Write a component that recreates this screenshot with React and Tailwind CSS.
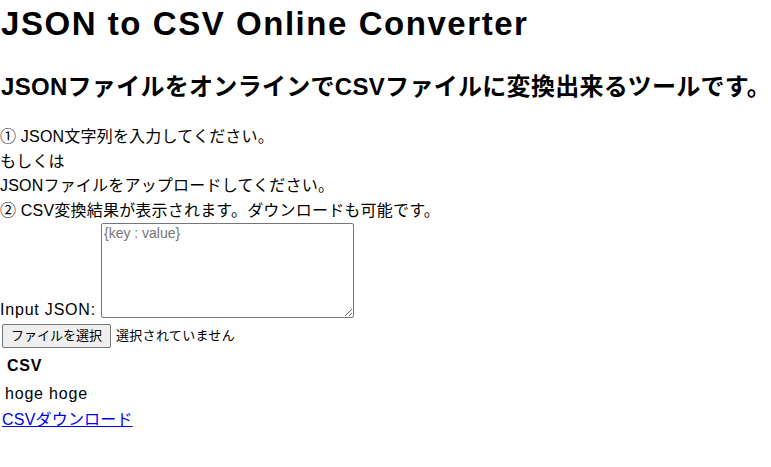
import React, { useState } from 'react';

const font = "font-['Liberation_Sans','Noto_Sans_CJK_JP',sans-serif]";

const App = () => {
  const [json, setJson] = useState('');

  return (
    <div className={`${font} text-black bg-white min-h-screen w-[771px] h-[467px] overflow-hidden`}>
      {/* Title */}
      <h1 className="text-[33px] leading-[40px] font-bold mt-[4px] ml-[1px] tracking-[1.55px] whitespace-nowrap">
        JSON to CSV Online Converter
      </h1>
      <h2 className="text-[24px] leading-[32px] font-bold mt-[27px] ml-[1px] tracking-[0.3px] whitespace-nowrap">
        JSONファイルをオンラインでCSVファイルに変換出来るツールです。
      </h2>

      {/* Instructions */}
      <div className="mt-[22px] text-[16px] leading-[24.5px] tracking-[0.2px]">
        <p>① JSON文字列を入力してください。</p>
        <p>もしくは</p>
        <p>JSONファイルをアップロードしてください。</p>
        <p>② CSV変換結果が表示されます。ダウンロードも可能です。</p>
      </div>

      {/* Input */}
      <div className="flex items-end">
        <label className="text-[16px] leading-[20px] mb-[-2px] tracking-[0.8px]">Input JSON:</label>
        <textarea
          value={json}
          onChange={(e) => setJson(e.target.value)}
          placeholder="{key : value}"
          className="ml-[5px] w-[253px] h-[95px] border border-[#767676] rounded-[2px] px-[2px] py-[1px] text-[14px] leading-[17px] placeholder:text-[#757575] resize-y"
        />
      </div>

      {/* File select */}
      <div className="flex items-center mt-[6px] ml-[2px] text-[13px]">
        <button className="h-[24px] px-[8px] bg-[#efefef] border border-[#767676] rounded-[2px] text-[13px] leading-[16px]">
          ファイルを選択
        </button>
        <span className="ml-[5px] tracking-[0.3px]">選択されていません</span>
      </div>

      {/* Result */}
      <div className="mt-[8px] ml-[7px] text-[16px] leading-[20px] font-bold tracking-[0.8px]">CSV</div>
      <div className="mt-[8px] ml-[5px] text-[16px] leading-[20px] tracking-[0.8px]">hoge hoge</div>
      <a href="#" className="block mt-[6px] ml-[2px] text-[16px] leading-[20px] text-[#0000ee] underline w-fit tracking-[0.2px]">
        CSVダウンロード
      </a>
    </div>
  );
};

export default App;
